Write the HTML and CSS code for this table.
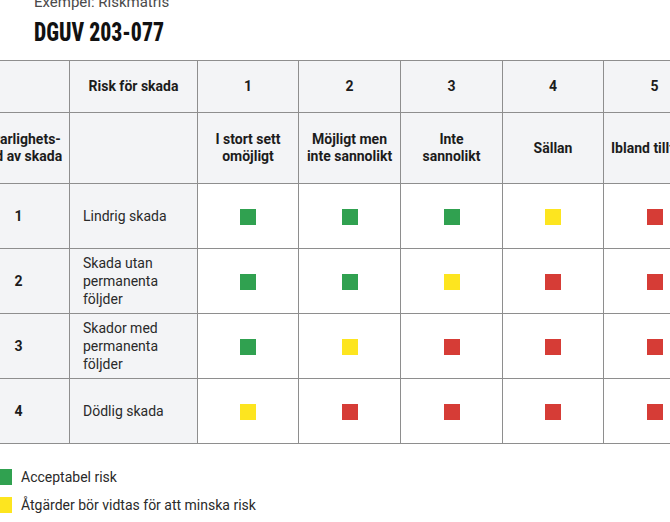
FILE: index.html
```html
<!DOCTYPE html>
<html lang="sv">
<head>
<meta charset="utf-8">
<title>Riskmatris DGUV 203-077</title>
<link rel="stylesheet" href="styles.css">
</head>
<body>
<div class="page">
  <p class="eyebrow">Exempel: Riskmatris</p>
  <h1 class="title"><span class="title-text">DGUV 203-077</span></h1>
  <table class="matrix">
    <colgroup>
      <col class="c-sev"><col class="c-label"><col class="c-a"><col class="c-b"><col class="c-b"><col class="c-a"><col class="c-b">
    </colgroup>
    <tr class="r-head1">
      <th class="hd"></th>
      <th class="hd">Risk för skada</th>
      <th class="hd">1</th>
      <th class="hd">2</th>
      <th class="hd">3</th>
      <th class="hd">4</th>
      <th class="hd">5</th>
    </tr>
    <tr class="r-head2">
      <th class="hd">Allvarlighets-<br>grad av skada</th>
      <th class="hd"></th>
      <th class="hd">I stort sett<br>omöjligt</th>
      <th class="hd">Möjligt men<br>inte sannolikt</th>
      <th class="hd">Inte<br>sannolikt</th>
      <th class="hd">Sällan</th>
      <th class="hd hd-clip">Ibland tillfälligt</th>
    </tr>
    <tr class="r-body">
      <th class="num">1</th>
      <td class="lbl">Lindrig skada</td>
      <td class="cell"><span class="sq g"></span></td>
      <td class="cell"><span class="sq g"></span></td>
      <td class="cell"><span class="sq g"></span></td>
      <td class="cell"><span class="sq y"></span></td>
      <td class="cell"><span class="sq r"></span></td>
    </tr>
    <tr class="r-body">
      <th class="num">2</th>
      <td class="lbl">Skada utan<br>permanenta<br>följder</td>
      <td class="cell"><span class="sq g"></span></td>
      <td class="cell"><span class="sq g"></span></td>
      <td class="cell"><span class="sq y"></span></td>
      <td class="cell"><span class="sq r"></span></td>
      <td class="cell"><span class="sq r"></span></td>
    </tr>
    <tr class="r-body">
      <th class="num">3</th>
      <td class="lbl">Skador med<br>permanenta<br>följder</td>
      <td class="cell"><span class="sq g"></span></td>
      <td class="cell"><span class="sq y"></span></td>
      <td class="cell"><span class="sq r"></span></td>
      <td class="cell"><span class="sq r"></span></td>
      <td class="cell"><span class="sq r"></span></td>
    </tr>
    <tr class="r-body">
      <th class="num">4</th>
      <td class="lbl">Dödlig skada</td>
      <td class="cell"><span class="sq y"></span></td>
      <td class="cell"><span class="sq r"></span></td>
      <td class="cell"><span class="sq r"></span></td>
      <td class="cell"><span class="sq r"></span></td>
      <td class="cell"><span class="sq r"></span></td>
    </tr>
  </table>
  <ul class="legend">
    <li class="legend-item"><span class="key g"></span>Acceptabel risk</li>
    <li class="legend-item"><span class="key y"></span>Åtgärder bör vidtas för att minska risk</li>
  </ul>
</div>
</body>
</html>
```

FILE: styles.css
```css
html, body {
  margin: 0;
  padding: 0;
  overflow: hidden;
  background: #ffffff;
}

body {
  font-family: Roboto, "Liberation Sans", sans-serif;
  color: #1c1c1c;
}

.page {
  margin: -8px 0 0 -33px;
  width: 760px;
}

.eyebrow {
  margin: 0;
  padding-left: 67px;
  font-size: 15px;
  line-height: 20px;
  color: #4a4a4a;
}

.title {
  margin: 6px 0 0;
  padding-left: 67px;
  font-family: Roboto, "Liberation Sans", sans-serif;
  font-weight: 800;
  font-stretch: 75%;
  font-size: 25px;
  line-height: 29px;
  color: #111111;
}

.title-text {
  display: inline-block;
  transform: scaleX(0.87);
  transform-origin: left center;
}

.matrix {
  margin-top: 13px;
  border-collapse: collapse;
  table-layout: fixed;
  width: 738px;
  font-size: 14px;
}

.c-sev { width: 102px; }
.c-label { width: 128px; }
.c-a { width: 101px; }
.c-b { width: 102px; }

.matrix th,
.matrix td {
  border: 1px solid #8e8e8e;
  padding: 0;
}

.r-head1 { height: 52px; }
.r-head2 { height: 71px; }
.r-body { height: 65px; }

.hd {
  background: #f3f4f6;
  font-weight: 700;
  line-height: 17px;
  text-align: center;
  vertical-align: middle;
}

.hd-clip {
  text-align: left;
  padding-left: 7px !important;
  white-space: nowrap;
  overflow: hidden;
}

.num {
  background: #f3f4f6;
  font-weight: 700;
  text-align: center;
}

.lbl {
  background: #f3f4f6;
  padding-left: 13px !important;
  line-height: 18px;
  color: #2a2a2a;
}

.cell {
  background: #ffffff;
  text-align: center;
  vertical-align: middle;
}

.sq {
  display: inline-block;
  width: 16px;
  height: 16px;
  vertical-align: middle;
}

.g { background: #30a150; }
.y { background: #fde51f; }
.r { background: #d63c36; }

.legend {
  list-style: none;
  margin: 25px 0 0 29px;
  padding: 0;
  display: flex;
  flex-direction: column;
  gap: 12px;
}

.legend-item {
  display: flex;
  align-items: center;
  gap: 9px;
  font-size: 14px;
  line-height: 16px;
  color: #2a2a2a;
}

.key {
  display: inline-block;
  width: 16px;
  height: 16px;
  flex: none;
}
```
